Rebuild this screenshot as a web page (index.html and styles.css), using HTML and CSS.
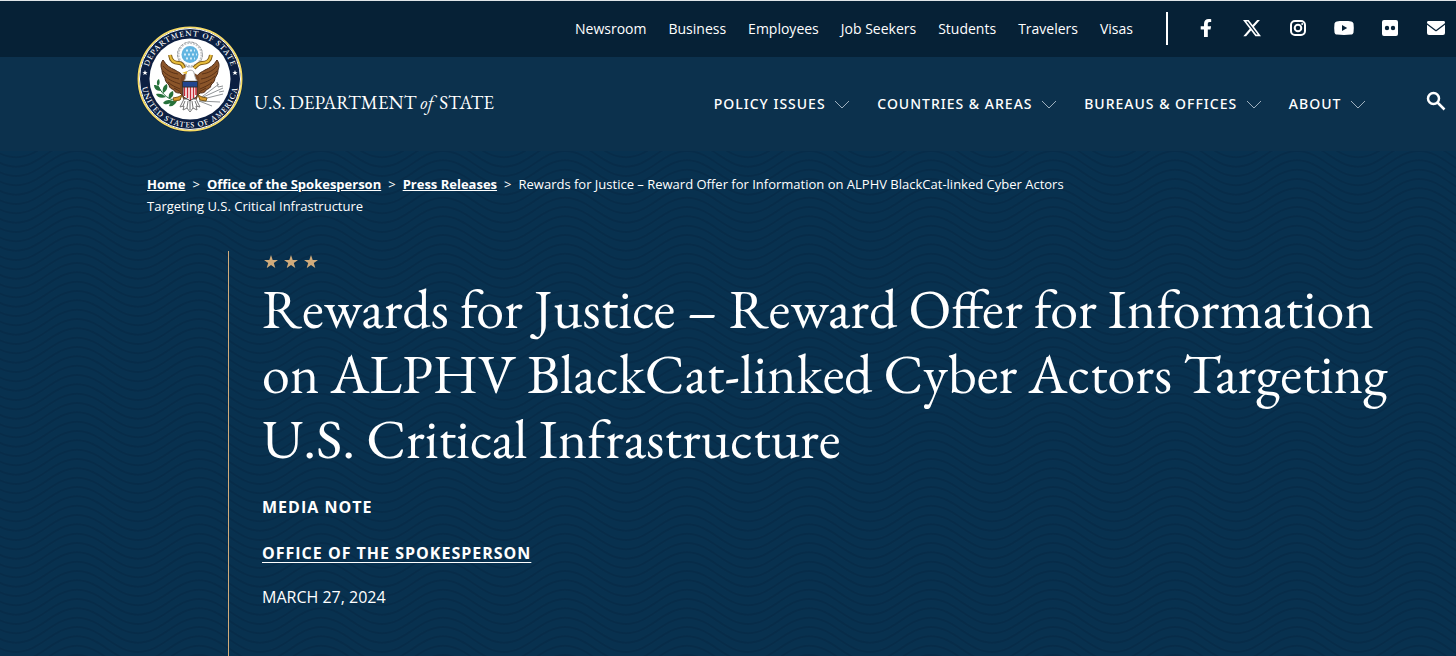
FILE: index.html
```html
<!DOCTYPE html>
<html lang="en">
<head>
<meta charset="UTF-8" />
<meta name="viewport" content="width=device-width, initial-scale=1" />
<title>Rewards for Justice – Reward Offer for Information on ALPHV BlackCat-linked Cyber Actors Targeting U.S. Critical Infrastructure</title>
<link rel="stylesheet" href="styles.css">
</head>
<body>
  <header class="site-header">
    <div class="top-bar">
      <nav class="top-nav" aria-label="Audiences">
        <a href="#">Newsroom</a>
        <a href="#">Business</a>
        <a href="#">Employees</a>
        <a href="#">Job Seekers</a>
        <a href="#">Students</a>
        <a href="#">Travelers</a>
        <a href="#">Visas</a>
      </nav>
      <div class="social">
        <a href="#" aria-label="Facebook"><svg viewBox="0 0 20 20"><path d="M8 19V11.500H4.700V8.200H8V6C8 2.700 9.800 1 12.700 1c1.200 0 2.500.2 2.500.2v2.900h-1.500c-1.500 0-1.900.9-1.900 1.800v2.300h3.300l-.6 3.300h-2.700V19z"/></svg></a>
        <a href="#" aria-label="X"><svg viewBox="0 0 24 24"><path d="M18.200 2.300h3.300l-7.200 8.200 8.500 11.300h-6.700l-5.200-6.900-6 6.900H1.600l7.700-8.900L1.200 2.300H8l4.700 6.200zm-1.100 17.500h1.800L7 4.100H5.100z"/></svg></a>
        <a href="#" aria-label="Instagram"><svg viewBox="0 0 20 20" class="outline"><rect x="3" y="3" width="14" height="14" rx="4"/><circle cx="10" cy="10" r="3.300"/><circle class="dot" cx="14.200" cy="5.900" r="1"/></svg></a>
        <a href="#" aria-label="YouTube"><svg viewBox="0 0 20 20"><path fill-rule="evenodd" d="M10 3c3 0 5.500.1 7.100.4 1.300.2 2.100 1 2.400 2.200.4 2.900.4 5.900 0 8.800-.3 1.200-1.100 2-2.400 2.200-4.700.5-9.500.5-14.200 0C1.600 16.400.8 15.600.5 14.400c-.4-2.900-.4-5.900 0-8.800C.8 4.400 1.600 3.600 2.900 3.400 4.500 3.100 7 3 10 3zM8 7v6l5.200-3z"/></svg></a>
        <a href="#" aria-label="Flickr"><svg viewBox="0 0 20 20"><path fill-rule="evenodd" d="M4 2h12a2 2 0 0 1 2 2v12a2 2 0 0 1-2 2H4a2 2 0 0 1-2-2V4a2 2 0 0 1 2-2zm3 5.800a2.200 2.200 0 1 0 0 4.400 2.200 2.200 0 0 0 0-4.400zm6 0a2.200 2.200 0 1 0 0 4.400 2.200 2.200 0 0 0 0-4.400z"/></svg></a>
        <a href="#" aria-label="Email"><svg viewBox="0 0 20 20"><path d="M2.500 3h15c1 0 1.500.7 1.500 1.500 0 .6-.2 1-.7 1.300L10 12 1.700 5.800C1.200 5.500 1 5.100 1 4.500 1 3.700 1.500 3 2.500 3zM1 6.800l8.200 6.100c.5.400 1.100.4 1.600 0L19 6.800V15a2 2 0 0 1-2 2H3a2 2 0 0 1-2-2z"/></svg></a>
      </div>
    </div>

    <div class="main-bar">
      <a class="brand" href="#">
        <svg class="seal" viewBox="0 0 106 106" role="img" aria-label="Department of State seal">
          <defs>
            <path id="arcTop" d="M10 53a43 43 0 0 1 86 0"/>
            <path id="arcBottom" d="M4.500 53a48.500 48.500 0 0 0 97 0"/>
          </defs>
          <circle class="seal-edge" cx="53" cy="53" r="53"/>
          <circle class="seal-gold" cx="53" cy="53" r="51.500"/>
          <circle class="seal-ring" cx="53" cy="53" r="50.500"/>
          <circle class="seal-disc" cx="53" cy="53" r="40.500"/>
          <text class="seal-text"><textPath href="#arcTop" startOffset="50%">DEPARTMENT OF STATE</textPath></text>
          <text class="seal-text"><textPath href="#arcBottom" startOffset="50%">UNITED STATES OF AMERICA</textPath></text>
          <path class="seal-star" d="M8 44l.7 1.900h2l-1.600 1.200.6 2L8 47.900l-1.700 1.200.6-2-1.600-1.200h2zM98 44l.7 1.900h2l-1.600 1.200.6 2-1.700-1.200-1.700 1.200.6-2-1.600-1.200h2z"/>
          <!-- glory -->
          <circle class="cloud-edge" cx="53" cy="28.500" r="12.500"/>
          <circle class="cloud" cx="53" cy="28.500" r="11.500"/>
          <circle class="glory" cx="53" cy="28.500" r="8.500"/>
          <path class="glory-stars" d="M49 24.500h9M47 28.500h13M49 32.500h9"/>
          <!-- wings -->
          <path class="wing" d="M26 34c-3 4-2 7-1 10 0 3 1 5 3 8 0 3 2 5 4 7 0 3 3 4 5 5 1 3 4 3 6 3l4 4V52c-2-5-6-6-9-8-5-2-9-5-12-10z"/>
          <path class="wing" d="M80 34c3 4 2 7 1 10 0 3-1 5-3 8 0 3-2 5-4 7 0 3-3 4-5 5-1 3-4 3-6 3l-4 4V52c2-5 6-6 9-8 5-2 9-5 12-10z"/>
          <path class="feather" d="M26 40c4 5 9 7 15 8M26 45c5 5 10 7 16 8M28 50c5 5 10 6 15 8M31 56c4 4 8 5 12 7M37 62l7 4M80 40c-4 5-9 7-15 8M80 45c-5 5-10 7-16 8M78 50c-5 5-10 6-15 8M75 56c-4 4-8 5-12 7M69 62l-7 4"/>
          <path class="body" d="M44 51c3-4 5-4 9-4s6 0 9 4l1 14-4 10H47l-4-10z"/>
          <!-- scroll -->
          <path class="scroll-edge" d="M33 29c1 7 5 8 9 8 3 0 4 2 5 5M74 29c-1 7-5 8-9 8-3 0-5 2-8 5"/>
          <path class="scroll" d="M33 29c1 7 5 8 9 8 3 0 4 2 5 5M74 29c-1 7-5 8-9 8-3 0-5 2-8 5"/>
          <!-- tail and head -->
          <path class="tail" d="M47 73l-4 8 4-1-1 4 4-2 3 4 3-4 4 2-1-4 4 1-4-8z"/>
          <path class="tail-line" d="M48 75l-2 5M51 75l-1 7M53 75v9M55 75l1 7M58 75l2 5"/>
          <path class="head" d="M47 55c3-4 1-7 3-9 2-3 7-2 7 1 1 3 1 5 3 8z"/>
          <path class="beak" d="M50 45l-5 2 5 1z"/>
          <!-- branch and arrows -->
          <path class="stem" d="M44 73C37 76 28 73 21 60"/>
          <path class="leaf" d="M21 60c-2-3-1-6 1-7 1 3 1 5-1 7zM24 65c-5 0-7-3-7-6 4 0 6 2 7 6zM26 67c-1-5 1-8 4-9 1 4 0 7-4 9zM29 71c-5 2-9 0-10-3 4-1 7 0 10 3zM32 73c-1-5 1-7 4-8 1 4 0 6-4 8zM36 75c-4 4-8 4-10 2 2-3 6-4 10-2zM40 75c-2 4-5 6-8 5 1-4 4-6 8-5z"/>
          <path class="arrows" d="M62 73l20-15M62 73l24-11M62 74l24-6M62 75l21 1M62 75l13 5M80 56l1 5 5-1M82 66l5-1"/>
          <path class="claw" d="M45 69l-2 5-6 1-1-3 5-1zM61 69l2 5 6 1 1-3-5-1z"/>
          <!-- shield -->
          <path class="shield" d="M46 56h14v13c0 3-4 3-7 6-3-3-7-3-7-6z"/>
          <path class="stripes" d="M47.500 61v9M50.500 61v11M53.500 61v13M56.500 61v11M59 61v8"/>
          <path class="chief" d="M45.500 55.500h15v5.500h-15z"/>
        </svg>
        <span class="wordmark">U.S. DEPARTMENT <em>of</em> STATE</span>
      </a>
      <nav class="main-nav" aria-label="Main">
        <a href="#">POLICY ISSUES <svg viewBox="0 0 14 8"><path d="M0 0l7 7 7-7"/></svg></a>
        <a href="#">COUNTRIES &amp; AREAS <svg viewBox="0 0 14 8"><path d="M0 0l7 7 7-7"/></svg></a>
        <a href="#">BUREAUS &amp; OFFICES <svg viewBox="0 0 14 8"><path d="M0 0l7 7 7-7"/></svg></a>
        <a href="#">ABOUT <svg viewBox="0 0 14 8"><path d="M0 0l7 7 7-7"/></svg></a>
      </nav>
      <button class="search" type="button" aria-label="Search">
        <svg viewBox="0 0 20 20"><circle cx="7.500" cy="7.500" r="5.500"/><path d="M11.500 11.500l7 7"/></svg>
      </button>
    </div>
  </header>

  <main class="hero">
    <nav class="breadcrumbs" aria-label="Breadcrumb">
      <a href="#">Home</a><span class="sep">&gt;</span><a href="#">Office of the Spokesperson</a><span class="sep">&gt;</span><a href="#">Press Releases</a><span class="sep">&gt;</span>Rewards for Justice – Reward Offer for Information on ALPHV BlackCat-linked Cyber Actors Targeting U.S. Critical Infrastructure
    </nav>

    <article class="release">
      <svg class="stars" viewBox="0 0 54 14" aria-hidden="true">
        <path d="M7 0l1.700 4.900H14l-4.200 3.200 1.500 5L7 10.100l-4.300 3 1.500-5L0 4.900h5.300zM27 0l1.700 4.900H34l-4.200 3.200 1.500 5-4.300-3-4.300 3 1.500-5L20 4.900h5.300zM47 0l1.700 4.900H54l-4.200 3.200 1.500 5-4.300-3-4.300 3 1.500-5L40 4.900h5.300z"/>
      </svg>
      <h1>Rewards for Justice – Reward Offer for Information on ALPHV BlackCat-linked Cyber Actors Targeting U.S. Critical Infrastructure</h1>
      <p class="type">MEDIA NOTE</p>
      <p class="office"><a href="#">OFFICE OF THE SPOKESPERSON</a></p>
      <p class="date">MARCH 27, 2024</p>
    </article>
  </main>
</body>
</html>
```

FILE: styles.css
```css
:root {
  --navy-dark: #062136;
  --navy: #0c314d;
  --navy-hero: #08314f;
  --gold: #d0ab7b;
  --sans: "Open Sans", "Noto Sans", sans-serif;
  --serif: "EB Garamond", "Liberation Serif", serif;
}
* {
  box-sizing: border-box;
}
body {
  margin: 0;
  min-height: 100vh;
  display: flex;
  flex-direction: column;
  background: var(--navy-hero);
  color: #fff;
  font-family: var(--sans);
}
a {
  color: inherit;
  text-decoration: none;
}
p, h1 {
  margin: 0;
}
.top-bar {
  display: flex;
  justify-content: flex-end;
  align-items: center;
  height: 57px;
  padding: 0 10px 2px 0;
  border-top: 1px solid #dfe5e8;
  background: var(--navy-dark);
}
.top-nav {
  display: flex;
  gap: 22px;
  padding-right: 33px;
  font-size: 14px;
}
.social {
  display: flex;
  align-items: center;
  gap: 26px;
  height: 33px;
  padding-left: 28px;
  border-left: 2px solid #fff;
}
.social svg {
  display: block;
  width: 20px;
  height: 20px;
  fill: #fff;
}
.social .outline {
  fill: none;
  stroke: #fff;
  stroke-width: 2;
}
.social .dot {
  fill: #fff;
  stroke: none;
}
.main-bar {
  display: flex;
  align-items: center;
  height: 94px;
  padding: 0 10px 2px 137px;
  background: var(--navy);
}
.brand {
  display: flex;
  align-items: flex-end;
  gap: 11px;
  margin-top: -49px;
}
.seal {
  display: block;
  width: 106px;
  height: 106px;
}
.wordmark {
  padding-bottom: 17px;
  font: 400 19px/24px var(--serif);
  white-space: nowrap;
}
.wordmark em {
  margin-right: 2px;
}
.main-nav {
  display: flex;
  gap: 28px;
  margin-left: auto;
  font-family: "Noto Sans", var(--sans);
  font-size: 14px;
  font-weight: 500;
  letter-spacing: 1px;
  white-space: nowrap;
}
.main-nav svg {
  width: 14px;
  height: 8px;
  margin-left: 5px;
  fill: none;
  stroke: #9fb0be;
}
.search {
  margin: 0 0 4px 61px;
  padding: 0;
  border: 0;
  background: none;
  cursor: pointer;
}
.search svg {
  display: block;
  width: 20px;
  height: 20px;
  fill: none;
  stroke: #fff;
  stroke-width: 2.5;
}
.seal-edge { fill: #061a3c; }
.seal-gold { fill: none; stroke: #f5dc63; stroke-width: 2; }
.seal-ring { fill: #0c1f42; stroke: #fff; stroke-width: 1; }
.seal-disc { fill: #fff; }
.seal-text {
  fill: #fff;
  font: 500 8px var(--serif);
  letter-spacing: 1px;
  text-anchor: middle;
}
.seal-star { fill: #fff; }
.cloud-edge { fill: none; stroke: #85898c; stroke-dasharray: 3 1; }
.cloud { fill: #fff; stroke: #c3c6c8; stroke-width: 2; stroke-dasharray: 2 1; }
.glory { fill: #62b5e1; }
.glory-stars { stroke: #d5eefa; stroke-width: 2; stroke-dasharray: 2 2; }
.scroll-edge { fill: none; stroke: #7d5a17; stroke-width: 4; }
.scroll { fill: none; stroke: #e8bd3b; stroke-width: 2; }
.wing { fill: #8b5529; stroke: #4b2814; stroke-width: 1; }
.feather { fill: none; stroke: #5a3217; stroke-width: 1; }
.body { fill: #7a4722; }
.tail { fill: #fff; stroke: #777; stroke-width: 1; }
.tail-line { stroke: #777; }
.head { fill: #fff; stroke: #aaa; }
.beak { fill: #e8bd3b; }
.stem { fill: none; stroke: #26723b; }
.leaf { fill: #26723b; }
.arrows { fill: none; stroke: #909497; }
.claw { fill: #d99b2b; stroke: #7d5a17; }
.shield { fill: #fff; stroke: #333; }
.stripes { stroke: #c52b35; stroke-width: 1.5; }
.chief { fill: #23468f; stroke: #333; }
.hero {
  flex: 1;
  display: flex;
  flex-direction: column;
  padding: 22px 40px 0 147px;
  background: var(--navy-hero) url("data:image/svg+xml,%3Csvg xmlns='http://www.w3.org/2000/svg' width='122' height='28'%3E%3Cg fill='none' stroke='%23072c49' stroke-width='2'%3E%3Cpath id='w' d='M-61 -28c24 0 37 25 61 25s37-25 61-25 37 25 61 25 37-25 61-25'/%3E%3Cuse href='%23w' y='9.330'/%3E%3Cuse href='%23w' y='18.670'/%3E%3Cuse href='%23w' y='28'/%3E%3Cuse href='%23w' y='37.330'/%3E%3Cuse href='%23w' y='46.670'/%3E%3Cuse href='%23w' y='56'/%3E%3C/g%3E%3C/svg%3E") 16px 0;
}
.breadcrumbs {
  max-width: 960px;
  font-size: 13px;
  line-height: 22px;
}
.breadcrumbs a {
  font-weight: 700;
  text-decoration: underline;
}
.breadcrumbs .sep {
  margin: 0 7px;
}
.release {
  flex: 1;
  margin: 34px 0 0 81px;
  padding: 4px 0 48px 33px;
  border-left: 1px solid var(--gold);
}
.stars {
  display: block;
  width: 54px;
  height: 14px;
  margin-left: 2px;
  fill: var(--gold);
}
.release h1 {
  margin-top: 7px;
  font: 400 56px/65px var(--serif);
}
.release p {
  font-size: 16px;
  line-height: 22px;
}
.release .type {
  margin-top: 25px;
  font-weight: 700;
  letter-spacing: 1px;
}
.release .office {
  margin-top: 24px;
  font-weight: 700;
  letter-spacing: 1px;
}
.office a {
  text-decoration: underline;
  text-underline-offset: 3px;
}
.release .date {
  margin-top: 22px;
}
```
